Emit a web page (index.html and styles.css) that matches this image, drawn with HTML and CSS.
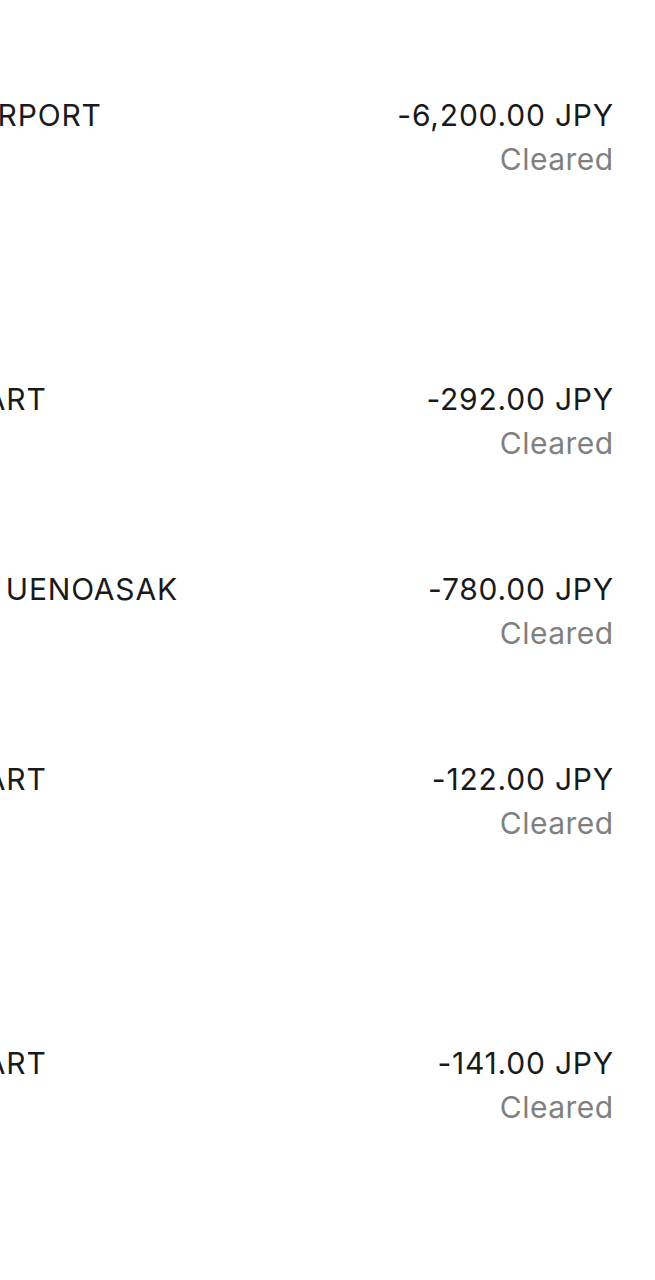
FILE: index.html
```html
<!DOCTYPE html>
<html lang="en">
<head>
<meta charset="utf-8">
<title>Transactions</title>
<link rel="stylesheet" href="styles.css">
</head>
<body>
<main class="page">
  <ul class="txn-list">
    <li class="txn txn--tall">
      <div class="txn__name">NARITA AIRPORT</div>
      <div class="txn__meta">
        <div class="txn__amount">-6,200.00 JPY</div>
        <div class="txn__status">Cleared</div>
      </div>
    </li>
    <li class="txn">
      <div class="txn__name">FAMILYMART</div>
      <div class="txn__meta">
        <div class="txn__amount">-292.00 JPY</div>
        <div class="txn__status">Cleared</div>
      </div>
    </li>
    <li class="txn">
      <div class="txn__name">7-ELEVEN UENOASAK</div>
      <div class="txn__meta">
        <div class="txn__amount">-780.00 JPY</div>
        <div class="txn__status">Cleared</div>
      </div>
    </li>
    <li class="txn txn--tall">
      <div class="txn__name">FAMILYMART</div>
      <div class="txn__meta">
        <div class="txn__amount">-122.00 JPY</div>
        <div class="txn__status">Cleared</div>
      </div>
    </li>
    <li class="txn">
      <div class="txn__name">FAMILYMART</div>
      <div class="txn__meta">
        <div class="txn__amount">-141.00 JPY</div>
        <div class="txn__status">Cleared</div>
      </div>
    </li>
  </ul>
</main>
</body>
</html>
```

FILE: styles.css
```css
html, body {
  margin: 0;
  padding: 0;
  background: #ffffff;
}

body {
  font-family: Inter, "Noto Sans", "Liberation Sans", sans-serif;
  font-size: 30px;
  line-height: 44px;
  letter-spacing: 0.8px;
  color: #1a1a1a;
  overflow: hidden;
}

.page {
  width: 655px;
  overflow: hidden;
}

.txn-list {
  list-style: none;
  margin: 0;
  padding: 42px 41px 0 0;
  display: flex;
  flex-direction: column;
}

.txn {
  display: flex;
  justify-content: space-between;
  align-items: flex-start;
  padding: 51px 0;
  margin-left: -155px;
}

.txn--tall {
  padding-bottom: 145px;
}

.txn__name {
  white-space: nowrap;
  color: #1a1a1a;
}

.txn__meta {
  display: flex;
  flex-direction: column;
  align-items: flex-end;
  text-align: right;
}

.txn__amount {
  color: #1a1a1a;
}

.txn__status {
  color: #808080;
  letter-spacing: 0.5px;
  margin-right: 0.3px;
}
```
